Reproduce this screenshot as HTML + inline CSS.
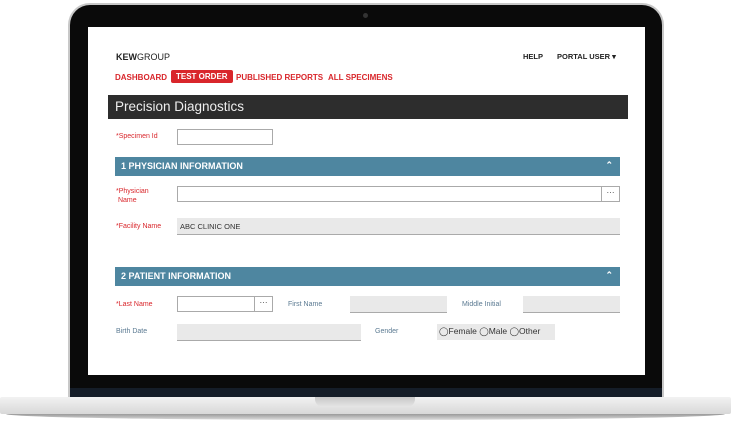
<!DOCTYPE html><html><head><style>
*{margin:0;padding:0;box-sizing:border-box}
body{width:731px;height:422px;background:#fff;position:relative;overflow:hidden;font-family:"Liberation Sans",sans-serif}
.a{position:absolute}
.bez{left:68px;top:3px;width:596px;height:396px;background:#0a0a0a;border-radius:22px 22px 0 0;border:2px solid #c8c8c8;border-bottom:none}
.scr{left:88px;top:27px;width:557px;height:348px;background:#fff}
.chin{left:70px;top:388px;width:592px;height:9px;background:#151d28}
.base{left:0;top:397px;width:731px;height:17px;background:linear-gradient(#f2f2f2,#d8d8d8);border-radius:2px}
.base2{left:6px;top:414px;width:719px;height:6px;background:linear-gradient(#9a9a9a,#ddd);border-radius:0 0 50% 50%/0 0 100% 100%}
.notch{left:315px;top:397px;width:100px;height:10px;background:linear-gradient(#c8c8c8,#e6e6e6);border-radius:0 0 8px 8px}
.nav{font-size:8px;font-weight:bold;color:#d9262b;top:73px}
.lbl{font-size:7px;color:#d9262b}
.blbl{font-size:7px;color:#5b7a92}
.inp{background:#fff;border:1px solid #aaa;height:16px}
.gin{background:#e9e9e9;border-bottom:1px solid #aaa;height:17px}
.hdr{left:115px;width:505px;height:19px;background:#4e86a0;color:#fff;font-size:9px;font-weight:bold;padding:4px 0 0 6px}
.hdr span{position:absolute;right:7px;top:3px;font-size:9px}
.dots{position:absolute;right:0;top:0;width:18px;height:100%;border-left:1px solid #aaa;font-size:8px;text-align:center;line-height:12px;color:#333}
</style></head><body>
<div class="a bez"></div>
<div class="a" style="left:363px;top:13px;width:5px;height:5px;border-radius:50%;background:#333"></div>
<div class="a scr"></div>
<div class="a chin"></div>
<div class="a base"></div>
<div class="a base2"></div>
<div class="a notch"></div>

<div class="a" style="left:116px;top:52px;font-size:9px;color:#222"><b>KEW</b>GROUP</div>
<div class="a" style="left:523px;top:52px;font-size:7.5px;font-weight:bold;color:#222">HELP</div>
<div class="a" style="left:557px;top:52px;font-size:7.5px;font-weight:bold;color:#222">PORTAL USER ▾</div>
<div class="a nav" style="left:115px">DASHBOARD</div>
<div class="a nav" style="left:171px;top:70px;background:#d9262b;color:#fff;padding:2px 5px;border-radius:2px">TEST ORDER</div>
<div class="a nav" style="left:236px">PUBLISHED REPORTS</div>
<div class="a nav" style="left:328px">ALL SPECIMENS</div>

<div class="a" style="left:108px;top:95px;width:520px;height:24px;background:#2d2d2d;color:#eee;font-size:13.5px;padding:4px 0 0 7px">Precision Diagnostics</div>

<div class="a lbl" style="left:116px;top:133px">*Specimen Id</div>
<div class="a inp" style="left:177px;top:129px;width:96px"></div>

<div class="a hdr" style="top:157px">1 PHYSICIAN INFORMATION<span>⌃</span></div>
<div class="a lbl" style="left:116px;top:187px;line-height:9px">*Physician<br>&nbsp;Name</div>
<div class="a inp" style="left:177px;top:186px;width:443px"><div class="dots">···</div></div>
<div class="a lbl" style="left:116px;top:223px">*Facility Name</div>
<div class="a gin" style="left:177px;top:218px;width:443px;font-size:7.5px;color:#333;padding:4px 3px">ABC CLINIC ONE</div>

<div class="a hdr" style="top:267px">2 PATIENT INFORMATION<span>⌃</span></div>
<div class="a lbl" style="left:116px;top:301px">*Last Name</div>
<div class="a inp" style="left:177px;top:296px;width:96px"><div class="dots">···</div></div>
<div class="a blbl" style="left:288px;top:301px">First Name</div>
<div class="a gin" style="left:350px;top:296px;width:97px"></div>
<div class="a blbl" style="left:462px;top:301px">Middle Initial</div>
<div class="a gin" style="left:523px;top:296px;width:97px"></div>
<div class="a blbl" style="left:116px;top:328px">Birth Date</div>
<div class="a gin" style="left:177px;top:324px;width:184px"></div>
<div class="a blbl" style="left:375px;top:328px">Gender</div>
<div class="a" style="left:437px;top:324px;width:118px;height:16px;background:#e9e9e9;font-size:8.5px;color:#333;padding:2px 0 0 2px">◯Female ◯Male ◯Other</div>
</body></html>
